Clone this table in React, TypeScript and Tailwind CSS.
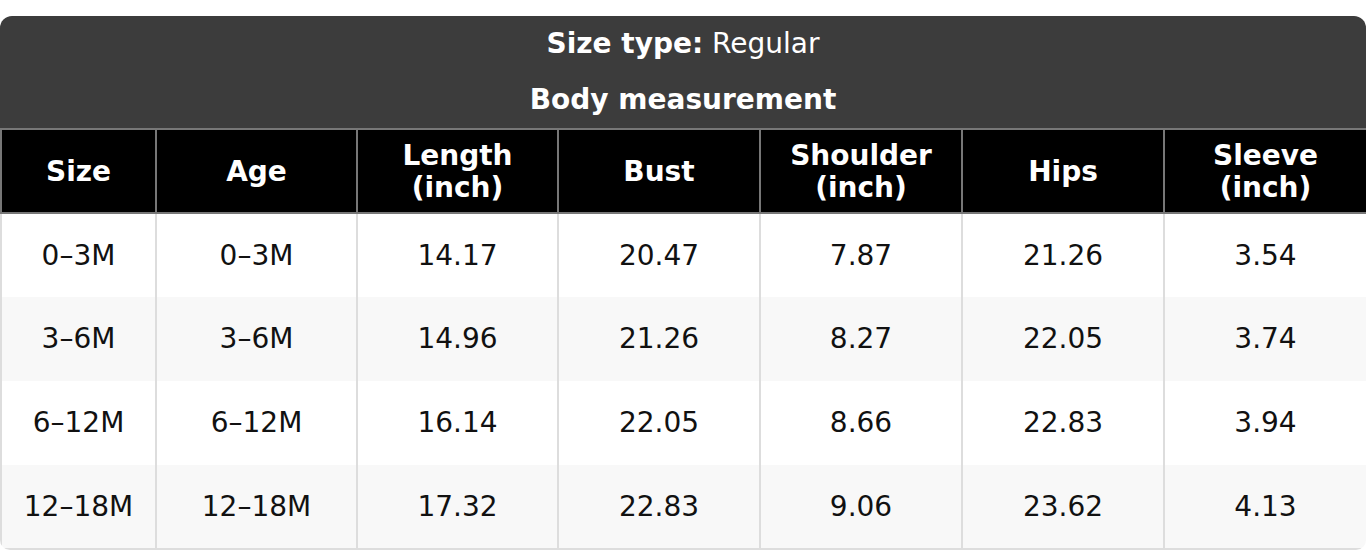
import React from "react";

const columns = [
  { label: "Size", w: "w-[155px]" },
  { label: "Age", w: "w-[201px]" },
  { label: "Length\n(inch)", w: "w-[201px]" },
  { label: "Bust", w: "w-[202px]" },
  { label: "Shoulder\n(inch)", w: "w-[202px]" },
  { label: "Hips", w: "w-[202px]" },
  { label: "Sleeve\n(inch)", w: "w-[203px]" },
];

const rows = [
  ["0–3M", "0–3M", "14.17", "20.47", "7.87", "21.26", "3.54"],
  ["3–6M", "3–6M", "14.96", "21.26", "8.27", "22.05", "3.74"],
  ["6–12M", "6–12M", "16.14", "22.05", "8.66", "22.83", "3.94"],
  ["12–18M", "12–18M", "17.32", "22.83", "9.06", "23.62", "4.13"],
];

export default function App() {
  return (
    <div className="min-h-[552px] bg-white pt-4 font-['DejaVu_Sans',sans-serif]">
      <div className="overflow-hidden rounded-[12px] rounded-b-[10px]">
        {/* Title block */}
        <div className="bg-[#3c3c3c] text-white text-center text-[28px] leading-[32px]">
          <div className="pt-[12px] pb-[12px]">
            <span className="font-bold">Size type:</span> Regular
          </div>
          <div className="pt-[12px] pb-[12px] font-bold">Body measurement</div>
        </div>

        <table className="w-full table-fixed border-collapse text-[28px] leading-[32px]">
          <colgroup>
            {columns.map((c) => (
              <col key={c.label} className={c.w} />
            ))}
          </colgroup>
          <thead>
            <tr>
              {columns.map((c) => (
                <th
                  key={c.label}
                  className="h-[84px] border-2 border-[#777] bg-black p-0 pt-[2px] align-middle font-bold text-white whitespace-pre-line"
                >
                  {c.label}
                </th>
              ))}
            </tr>
          </thead>
          <tbody>
            {rows.map((r, i) => (
              <tr key={i} className={i % 2 === 1 ? "bg-[#f8f8f8]" : "bg-white"}>
                {r.map((v, j) => (
                  <td
                    key={j}
                    className={
                      "h-[84px] border-x-2 border-[#dddddd] p-0 text-center align-middle text-[#111] " +
                      (i === rows.length - 1 ? "border-b-2" : "")
                    }
                  >
                    {v}
                  </td>
                ))}
              </tr>
            ))}
          </tbody>
        </table>
      </div>
    </div>
  );
}
